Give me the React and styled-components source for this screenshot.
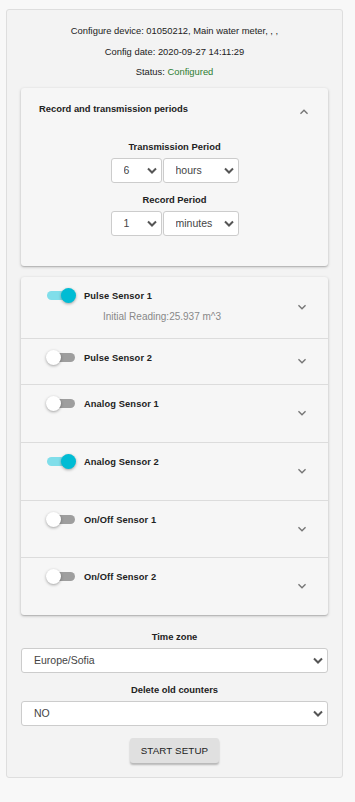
import React from "react";
import styled, { createGlobalStyle } from "styled-components";

const GlobalStyle = createGlobalStyle`
  body {
    margin: 0;
    background-color: #f8f8f8;
    font-family: "Liberation Sans", Arial, sans-serif;
    color: #222;
  }
`;

const sensors = [
  { name: "Pulse Sensor 1", on: true, note: "Initial Reading:25.937 m^3", height: 61 },
  { name: "Pulse Sensor 2", on: false, height: 46 },
  { name: "Analog Sensor 1", on: false, height: 58 },
  { name: "Analog Sensor 2", on: true, height: 58 },
  { name: "On/Off Sensor 1", on: false, height: 57 },
  { name: "On/Off Sensor 2", on: false, height: 58 },
];

const ExpandIcon = ({ up }) => (
  <ChevronSvg viewBox="0 0 24 24" $up={up}>
    <path d="M7.41 8.59 12 13.17l4.59-4.58L18 10l-6 6-6-6 1.41-1.41z" />
  </ChevronSvg>
);

const SelectBox = ({ value, width }) => (
  <SelectWrap $width={width}>
    <Select defaultValue={value}>
      <option>{value}</option>
    </Select>
    <SelectArrow viewBox="0 0 10 6">
      <polyline points="1,1 5,5 9,1" />
    </SelectArrow>
  </SelectWrap>
);

const App = () => {
  return (
    <>
      <GlobalStyle />
      <Page>
        <Container>
          <Header>
            <Line>Configure device: 01050212, Main water meter, , ,</Line>
            <Line>Config date: 2020-09-27 14:11:29</Line>
            <Line>
              Status: <Green>Configured</Green>
            </Line>
          </Header>

          <Card>
            <CardHead>
              <CardTitle>Record and transmission periods</CardTitle>
              <ExpandIcon up />
            </CardHead>
            <Periods>
              <FieldLabel>Transmission Period</FieldLabel>
              <SelectPair>
                <SelectBox value="6" width={51} />
                <SelectBox value="hours" width={76} />
              </SelectPair>
              <FieldLabel $top={10}>Record Period</FieldLabel>
              <SelectPair>
                <SelectBox value="1" width={51} />
                <SelectBox value="minutes" width={76} />
              </SelectPair>
            </Periods>
          </Card>

          <SensorCard>
            {sensors.map((s) => (
              <SensorRow key={s.name} $height={s.height}>
                <SensorLeft>
                  <SensorTop>
                    <Toggle $on={s.on}>
                      <Thumb $on={s.on} />
                    </Toggle>
                    <SensorName>{s.name}</SensorName>
                  </SensorTop>
                  {s.note && <Note>{s.note}</Note>}
                </SensorLeft>
                <ExpandIcon />
              </SensorRow>
            ))}
          </SensorCard>

          <Bottom>
            <FieldLabel>Time zone</FieldLabel>
            <SelectBox value="Europe/Sofia" width={307} />
            <FieldLabel $top={10}>Delete old counters</FieldLabel>
            <SelectBox value="NO" width={307} />
            <Button>START SETUP</Button>
          </Bottom>
        </Container>
      </Page>
    </>
  );
};

export default App;

const Page = styled.div`
  padding: 9px 12px 25px 6px;
`;

const Container = styled.div`
  background-color: #f3f3f3;
  border: 1px solid #dedede;
  border-radius: 3px;
  padding: 11px 14px 14px 14px;
`;

const Header = styled.div`
  display: flex;
  flex-direction: column;
  align-items: center;
  margin-bottom: 5px;
`;

const Line = styled.div`
  font-size: 9.4px;
  line-height: 20.5px;
  color: #222;
`;

const Green = styled.span`
  color: #2e7d32;
`;

const Card = styled.div`
  background-color: #f6f6f6;
  border-radius: 3px;
  box-shadow: 0 1px 3px rgba(0, 0, 0, 0.25), 0 1px 1px rgba(0, 0, 0, 0.1);
  padding-bottom: 30px;
`;

const CardHead = styled.div`
  display: flex;
  justify-content: space-between;
  align-items: flex-start;
  padding: 14px 18px 0 18px;
  height: 38px;
  svg {
    margin-top: 2px;
  }
`;

const CardTitle = styled.div`
  font-size: 9.4px;
  font-weight: bold;
  line-height: 14px;
`;

const ChevronSvg = styled.svg`
  width: 16px;
  height: 16px;
  fill: #757575;
  flex-shrink: 0;
  transform: ${(p) => (p.$up ? "rotate(180deg)" : "none")};
  margin-right: -2px;
`;

const Periods = styled.div`
  display: flex;
  flex-direction: column;
  align-items: center;
`;

const FieldLabel = styled.div`
  font-size: 9.4px;
  font-weight: bold;
  line-height: 14px;
  margin-top: ${(p) => p.$top || 0}px;
  margin-bottom: 4px;
  text-align: center;
`;

const SelectPair = styled.div`
  display: flex;
  gap: 1px;
`;

const SelectWrap = styled.div`
  position: relative;
  width: ${(p) => p.$width}px;
  height: 25px;
`;

const Select = styled.select`
  appearance: none;
  width: 100%;
  height: 100%;
  box-sizing: border-box;
  background-color: #fff;
  border: 1px solid #cccccc;
  border-radius: 3px;
  padding: 0 0 0 12px;
  font-family: "Liberation Sans", Arial, sans-serif;
  font-size: 10.5px;
  color: #444;
  outline: none;
`;

const SelectArrow = styled.svg`
  position: absolute;
  right: 5px;
  top: 9px;
  width: 10px;
  height: 7px;
  fill: none;
  stroke: #555;
  stroke-width: 2;
  pointer-events: none;
`;

const SensorCard = styled.div`
  margin-top: 11px;
  background-color: #f6f6f6;
  border-radius: 3px;
  box-shadow: 0 1px 3px rgba(0, 0, 0, 0.25), 0 1px 1px rgba(0, 0, 0, 0.1);
`;

const SensorRow = styled.div`
  display: flex;
  justify-content: space-between;
  align-items: center;
  box-sizing: border-box;
  height: ${(p) => p.$height}px;
  padding: 0 20px 0 25px;
  border-top: 1px solid #dcdcdc;
  &:first-child {
    border-top: none;
  }
`;

const SensorLeft = styled.div`
  align-self: flex-start;
  padding-top: 14px;
`;

const SensorTop = styled.div`
  display: flex;
  align-items: center;
  gap: 9px;
`;

const Toggle = styled.div`
  position: relative;
  width: 28px;
  height: 9px;
  border-radius: 5px;
  margin-left: 1px;
  background-color: ${(p) => (p.$on ? "#80deea" : "#9e9e9e")};
`;

const Thumb = styled.div`
  position: absolute;
  top: -3px;
  left: ${(p) => (p.$on ? "14px" : "-1px")};
  width: 15px;
  height: 15px;
  border-radius: 50%;
  background-color: ${(p) => (p.$on ? "#00bcd4" : "#fff")};
  box-shadow: 0 1px 3px rgba(0, 0, 0, 0.35);
`;

const SensorName = styled.div`
  font-size: 9.3px;
  font-weight: bold;
  letter-spacing: 0.1px;
`;

const Note = styled.div`
  font-size: 10px;
  color: #888;
  margin-top: 10px;
  padding-left: 57px;
`;

const Bottom = styled.div`
  display: flex;
  flex-direction: column;
  align-items: center;
  margin-top: 15px;
`;

const Button = styled.div`
  margin-top: 12px;
  width: 89px;
  height: 25px;
  display: flex;
  justify-content: center;
  align-items: center;
  background-color: #e0e0e0;
  border-radius: 3px;
  box-shadow: 0 2px 2px rgba(0, 0, 0, 0.25);
  font-size: 9.8px;
  letter-spacing: 0.1px;
  color: #222;
`;
